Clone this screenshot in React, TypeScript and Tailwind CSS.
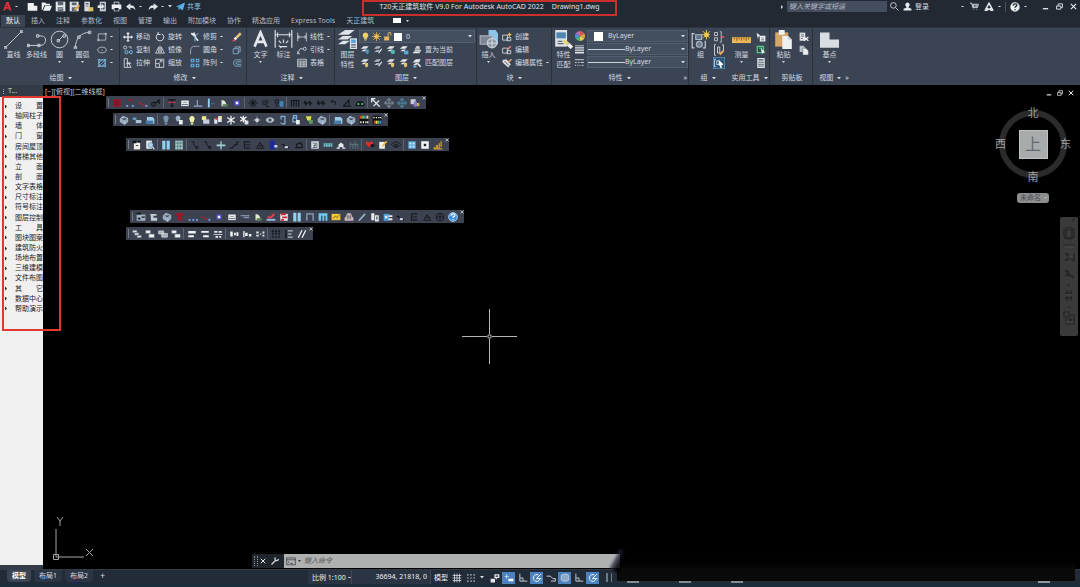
import { ReactNode, useState } from 'react'
import clsx from 'clsx'

// 16x16 drawings, shared by the ribbon, the toolbars and the status bar
const art: Record<string, ReactNode> = {
  // quick access
  newFile: <path fill="#eef0f2" d="M1 3h9l5 4v7H1z M10 3v4h5" />,
  open: <path fill="#eef0f2" d="M1 2h5l2 2h5v2H5l-3 7H1z M6 7h10l-3 7H3z" />,
  save: <><path fill="#e4e7ea" d="M1 1h14v14H1z" /><path fill="#59626e" d="M4 1h8v5H4z M4 9h8v6H4z" /><path fill="#e4e7ea" d="M5 11h6v1H5z" /></>,
  saveAs: <><path fill="#e4e7ea" d="M1 1h13v14H1z" /><path fill="#59626e" d="M4 2h7v4H4z M4 9h7v6H4z" /><path stroke="#e3a44c" strokeWidth="3" d="M8 13l7-7" /></>,
  sheet: <><path fill="#d9dde1" d="M2 1h8v14H2z" /><path fill="#5c6672" d="M4 3h4v2H4z M4 7h4v1H4z" /><path fill="#d8c163" d="M8 9h7v6H8z" /></>,
  phone: <><path fill="#c9ced5" d="M4 1h9v14H4z" /><path fill="#414a57" d="M6 3h5v9H6z" /><path fill="#e4e7ea" d="M1 6h6V4l4 4-4 4v-2H1z" /></>,
  print: <path fill="#eef0f2" fillRule="evenodd" d="M4 1h8v4h3v7h-3v3H4v-3H1V5h3z M5 2v3h6V2z M5 10v4h6v-4z" />,
  undo: <path fill="#e1e5ea" d="M7 2v3c5 0 8 3 8 8-2-3-4-4-8-4v4L0 7z" />,
  redo: <path fill="#e1e5ea" d="M9 2v3c-5 0-8 3-8 8 2-3 4-4 8-4v4l7-6z" />,
  plane: <path fill="#58b4ec" d="M0 8L16 1l-4 14-5-4-2 4-1-6 8-5-9 5z" />,
  search: <path fill="none" stroke="#d2d7dd" strokeWidth="1.6" d="M10 10l5 5 M11 6a5 5 0 1 1-10 0 5 5 0 0 1 10 0z" />,
  user: <path fill="#e8ebee" d="M8 1a4 4 0 0 1 2 7.400v1.600l5 2v3H1v-3l5-2V8.400A4 4 0 0 1 8 1z" />,
  cart: <path fill="none" stroke="#e1e5ea" strokeWidth="1.600" d="M0 2h3l2 8h8l2-6H4 M6 5v4 M9 5v4 M12 5v4 M6 13v1 M12 13v1" />,
  appStore: <path fill="none" stroke="#e8ebee" strokeWidth="2.400" d="M1 13h5 M15 13h-5 M2 13L8 2l6 11 M4 10l4 2 4-2" />,
  help: <><circle cx="8" cy="8" r="7.500" fill="#eef0f2" /><path fill="none" stroke="#222933" strokeWidth="2" d="M5 6c0-4 6-4 6-1 0 2-3 2-3 4 M8 11v2" /></>,
  min: <path stroke="#e8ebee" strokeWidth="3" d="M2 13h12" />,
  restore: <path fill="none" stroke="#e8ebee" strokeWidth="2" d="M1 7h10v7H1z M5 7V2h10v8h-4" />,
  close: <path stroke="#e8ebee" strokeWidth="2.600" d="M2 2l12 12 M14 2L2 14" />,

  // draw
  line: <path fill="none" stroke="#c9ced6" strokeWidth=".8" d="M1 15L15 1 M0 14h2v2H0z M14 0h2v2h-2z" />,
  pline: <path fill="none" stroke="#c9ced6" strokeWidth=".8" d="M0 13h11c6 0 6-8 1-8H9 M0 12h2v2H0z M9 12h2v2H9z M8 4h2v2H8z" />,
  circle: <path fill="none" stroke="#c9ced6" strokeWidth=".8" d="M15 8A7 7 0 1 1 1 8a7 7 0 0 1 14 0z M7 9l4-4 M6 8h2v2H6z M11 4h2v2h-2z" />,
  arc: <path fill="none" stroke="#c9ced6" strokeWidth=".8" d="M2 15C2 7 7 2 14 2 M1 14h2v2H1z M4 5h2v2H4z M13 1h2v2h-2z" />,
  rect: <path fill="none" stroke="#c9ced6" strokeWidth="1.200" d="M2 3h12v10H2z M1 12h2v2H1z M13 2h2v2h-2z" />,
  ellipse: <path fill="none" stroke="#c9ced6" strokeWidth="1.200" d="M15 8c0 6-14 6-14 0s14-6 14 0z M8 7v2" />,
  hatch: <path fill="none" stroke="#8cc8ee" d="M3 3h10v10H3z M1 3h14 M1 13h14 M3 1v14 M13 1v14 M3 8l5-5 M3 13L13 3 M8 13l5-5" />,
  // modify
  move: <path fill="#e8ebee" d="M8 0l3 3H9v4h4V5l3 3-3 3V9H9v4h2l-3 3-3-3h2V9H3v2L0 8l3-3v2h4V3H5z" />,
  copy: <><path fill="none" stroke="#c9ced6" strokeWidth="1.400" d="M6 4A2.500 2.500 0 1 1 1 4a2.500 2.500 0 0 1 5 0z M9 3h4v3" /><path fill="none" stroke="#7fc1ee" strokeWidth="1.500" d="M8 11.500a2.500 2.500 0 1 1-5 0 2.500 2.500 0 0 1 5 0z M15 11.500a2.500 2.500 0 1 1-5 0 2.500 2.500 0 0 1 5 0z" /></>,
  stretch: <path fill="none" stroke="#dfe3e8" strokeWidth="1.300" d="M2 1h5v14H2z M7 5l6 10H7 M5 9h7 M10 7l3 2" />,
  rotate: <path fill="none" stroke="#dfe3e8" strokeWidth="1.600" d="M11 3a6 6 0 1 1-6 0 M5 0v4h4" />,
  mirror: <path fill="none" stroke="#dfe3e8" strokeWidth="1.300" d="M6 3v10H1z M10 3v10h5z M8 1v14" />,
  scale: <path fill="none" stroke="#dfe3e8" strokeWidth="1.300" d="M1 2h13v13H1z M1 9h6v6 M7 8l4-4 M8 4h3v3" />,
  trim: <><path stroke="#e8ebee" strokeWidth="2.600" d="M6 1l3 7 M8 8l5 6 M2 2l5 4" /><path fill="none" stroke="#8cc8ee" strokeWidth="1.500" d="M13 2L8 7v8" /></>,
  fillet: <path fill="none" stroke="#b9c0c9" strokeWidth="1.200" d="M1 15V9c0-5 3-7 7-7h7" />,
  array: <path fill="none" stroke="#5fb0e4" strokeWidth="1.800" d="M2 2h4v4H2z M10 2h4v4h-4z M2 10h4v4H2z M10 10h4v4h-4z" />,
  erase: <><path stroke="#e8c077" strokeWidth="4" d="M7 9l7-7" /><path stroke="#f0f0f0" strokeWidth="4" d="M4 12l3-3" /><path stroke="#cc4b5b" strokeWidth="3" d="M1 14l4-1" /></>,
  explode: <path fill="none" stroke="#8cb7d6" strokeWidth="1.300" d="M2 6h8v8H2z M5 6V3h8v8h-3 M10 6l3-3" />,
  offset: <path fill="none" stroke="#8cb7d6" strokeWidth="1.300" d="M15 3H7c-6 0-6 10 0 10h8 M15 6H8c-2 0-2 4 0 4h7" />,
  // annotate
  bigA: <path fill="none" stroke="#e4e8ec" strokeWidth="2.200" d="M3 14L8 2l5 12 M5 10h6" />,
  dimension: <path fill="none" stroke="#d8dde3" d="M1 0v15 M15 0v15 M1 4h14 M3 2v4 M13 2v4 M4 13l2 2 M8 8v3 M4 9l2 2 M12 9l-2 2 M5 14h6" />,
  linear: <path fill="none" stroke="#d2d7dd" strokeWidth="1.300" d="M1 1v14 M15 1v14 M1 8h14 M3 5v6 M13 5v6" />,
  leader: <path fill="none" stroke="#d2d7dd" strokeWidth="1.300" d="M1 14l4-8h5 M1 10v4h4 M15 6a2.500 2.500 0 1 1-5 0 2.500 2.500 0 0 1 5 0z" />,
  table: <path fill="none" stroke="#d2d7dd" strokeWidth="1.300" d="M1 2h14v12H1z M1 5h14 M1 8h14 M1 11h14 M6 5v9 M11 5v9" />,
  // layers
  layerProps: <><path fill="#dfe3e8" d="M0 4l6-4h8l-5 4z M0 8l4-3h8l-4 3z M0 12l4-3h6l-4 3z" /><path fill="#dfe3e8" d="M10 7h6v9h-6z" /><path fill="#5ba6d8" d="M11 8h4v3h-4z" /><path fill="#4a5463" d="M11 12h4v1h-4z M11 14h4v1h-4z" /></>,
  bulb: <path fill="#f2cf6a" d="M8 1a5 5 0 0 1 3 9v2H5v-2a5 5 0 0 1 3-9z M6 13h4v2H6z" />,
  sun: <><circle cx="8" cy="8" r="4" fill="#f3bd4d" /><path stroke="#f3bd4d" strokeWidth="1.300" d="M8 0v16 M0 8h16 M2 2l12 12 M14 2L2 14" /></>,
  unlock: <><path fill="#e8b860" d="M2 8h9v7H2z" /><path fill="none" stroke="#e8b860" strokeWidth="1.800" d="M9 8V4c0-4 5-4 5 0v2" /></>,
  layBlue: <><path fill="#e4e8ec" d="M1 6l5-4h8l-4 4z M2 10l4-3h5l-3 3z" /><path fill="#4c98cf" d="M9 7h5v5l-2 3-3-3z" /></>,
  layGray: <><path fill="#aeb6c0" d="M1 6l5-4h7l-4 4z M2 11l4-3h5l-3 3z" /><path stroke="#dfe3e8" strokeWidth="2" d="M9 13l5-7" /></>,
  layTeal: <><path fill="#e4e8ec" d="M1 6l5-4h8l-4 4z M2 10l4-3h5l-3 3z" /><circle cx="11" cy="11" r="3.500" fill="#4fb7b4" /></>,
  layLock: <><path fill="#e4e8ec" d="M1 6l5-4h8l-4 4z M2 10l4-3h5l-3 3z" /><path fill="#5ba6d8" d="M8 9h7v6H8z" /></>,
  layYellow: <><path fill="#e4e8ec" d="M1 6l5-4h8l-4 4z M2 10l4-3h5l-3 3z" /><path fill="#e2c366" d="M8 8h5v5l-3 2-2-2z" /></>,
  layStack: <><path fill="#e4e8ec" d="M1 13l4-5h10l-3 5z M4 7l3-5h5l1 5z" /><path stroke="#5c6672" d="M3 10h11 M5 5h8" /></>,
  layMatch: <><path fill="#e4e8ec" d="M1 7l5-5h8l-3 5z M2 11l4-3h4l-3 3z" /><path stroke="#e4e8ec" strokeWidth="2.500" d="M9 9l5 5" /><path fill="#74b9e6" d="M2 12h5v3H2z" /></>,
  // block
  insert: <><path fill="#8cc4ea" d="M8 0h6l2 3v9H8z" /><path fill="#7c8794" stroke="#aab2bc" d="M1 5h10v7H1z" /><circle cx="11" cy="11" r="4" fill="#8d97a3" stroke="#cdd3da" /><path stroke="#cdd3da" d="M7 11h8 M11 7v8" /></>,
  create: <><path fill="none" stroke="#d2d7dd" strokeWidth="1.400" d="M1 5h8v8H1z M8 9h6v5H8z" /><path stroke="#efc05f" strokeWidth="2" d="M12 1v6 M9 4h6" /></>,
  editBlock: <><path fill="none" stroke="#d2d7dd" strokeWidth="1.400" d="M1 5h8v8H1z M8 9h6v5H8z" /><path stroke="#e6897a" strokeWidth="2.500" d="M9 7l5-5" /></>,
  editAttr: <><path fill="#dfe3e8" d="M1 3l6-1 7 8-4 5-9-8z" /><path stroke="#3b4453" strokeWidth="1.500" d="M4 5l7 7" /><path stroke="#e7a77a" strokeWidth="2.500" d="M10 7l5-5" /></>,
  // properties
  matchProps: <><path fill="#dfe3e8" d="M1 0h10v14H1z" /><path fill="#4d86b3" d="M2 2h8v5H2z" /><path fill="#5c6672" d="M3 9h4v1H3z M3 11h5v1H3z" /><path stroke="#e9d37c" strokeWidth="3" d="M8 9l4 3" /><path stroke="#f2f4f6" strokeWidth="3" d="M12 12l3 3" /></>,
  wheel: <><path fill="#e0564a" d="M8 8V0a8 8 0 0 1 7 4z" /><path fill="#e99a3c" d="M8 8l7-4a8 8 0 0 1 0 8z" /><path fill="#e6cf52" d="M8 8l7 4a8 8 0 0 1-7 4z" /><path fill="#58b26a" d="M8 8v8a8 8 0 0 1-7-4z" /><path fill="#4b8fd4" d="M8 8l-7 4a8 8 0 0 1 0-8z" /><path fill="#c06bb0" d="M8 8L1 4a8 8 0 0 1 7-4z" /></>,
  weights: <path fill="#dfe3e8" d="M0 1h16v1H0z M0 4h16v2H0z M0 8h16v2H0z M0 12h16v3H0z" />,
  linetypes: <path fill="none" stroke="#dfe3e8" strokeWidth="1.500" d="M0 3h16 M0 8h3 M5 8h3 M10 8h6 M0 13h2 M4 13h2 M8 13h2 M12 13h3" />,
  // groups and utilities
  group: <><path fill="none" stroke="#c9ced6" d="M3 3H1v12h2 M12 9v6h-2" /><path fill="#5e7389" stroke="#aab6c3" d="M4 4h5v4H4z" /><circle cx="7" cy="12" r="2.500" fill="#6f7b89" stroke="#aab6c3" /><circle cx="13" cy="4" r="2" fill="#f6d27c" /><path stroke="#f3c35b" strokeWidth=".8" d="M13 0v8 M9 4h7 M10 1l6 6 M16 1l-6 6" /></>,
  ungroup: <><path fill="none" stroke="#b9c0c9" strokeWidth="1.300" d="M2 2h4v4H2z M2 9h4v4H2z M9 1h2v14H9" /><path stroke="#d9627a" strokeWidth="2" d="M10 8h5" /></>,
  groupEdit: <><path fill="none" stroke="#c9ced6" strokeWidth="1.300" d="M4 1H2v14h2 M6 4h3v8H6z M12 1h2v8" /><path stroke="#efaf62" strokeWidth="2.400" d="M9 14l5-5" /></>,
  groupSel: <><path fill="#2d567a" stroke="#7fc1ee" d="M0 0h16v16H0z" /><path fill="none" stroke="#d9ecf8" d="M4 3H2v10h2 M5 5h3v5H5z" /><path fill="#fff" d="M8 4l6 6-3 1 1 3-2 1-1-4-1 1z" /></>,
  ruler: <><path fill="#e9b659" d="M0 6h16v5H0z" /><path stroke="#a26d22" d="M2 6v2 M4 6v3 M6 6v2 M8 6v3 M10 6v2 M12 6v3 M14 6v2" /></>,
  quickSel: <><path fill="#eef0f2" d="M1 1l6 5-3 1-1 4z M6 6h9v9H6z" /><path fill="#4a5463" d="M8 9h5v1H8z M8 12h5v1H8z" /></>,
  selAll: <><path fill="none" stroke="#57c785" strokeWidth="2" d="M2 2h10v10H2z M5 5h4v4" /><path fill="#fff" d="M8 6l7 6-4 0-1 3z" /></>,
  calc: <><path fill="#dfe3e8" d="M2 0h12v16H2z" /><path fill="#4a5463" d="M4 2h8v2H4z M4 6h2v2H4z M7 6h2v2H7z M10 6h2v2h-2z M4 9h2v2H4z M7 9h2v2H7z M10 9h2v2h-2z M4 12h2v2H4z M7 12h2v2H7z M10 12h2v2h-2z" /></>,
  paste: <><path fill="#d5a667" d="M1 2h11v12H1z" /><path fill="#eef0f2" d="M4 0h5v4H4z M7 5h5l3 3v8H7z" /><path fill="#b9c0c9" d="M12 5v3h3z" /></>,
  cut: <><path fill="#dfe3e8" d="M1 1h9v13H1z" /><path fill="#4a5463" d="M3 4h5v1H3z M3 7h5v1H3z M3 10h3v1H3z" /><path stroke="#eef0f2" strokeWidth="2" d="M8 8l7 6 M15 8l-7 6" /></>,
  copyClip: <><path fill="#b9c0c9" d="M1 1h6l3 3v7H1z" /><path fill="#eef0f2" stroke="#4a5463" strokeWidth=".8" d="M6 5h5l4 4v7H6z" /></>,
  basePoint: <path fill="#d9dde1" d="M0 2h8v6h8v7H0z" />,

  // floating toolbars
  tRed: <><path fill="#a31529" d="M2 2h12v12H2z" /><path stroke="#5b1a2b" d="M2 6h12 M2 10h12 M6 2v12 M10 2v12" /></>,
  tDots: <path fill="#7aa5ee" d="M1 11h3v3H1z M7 11h3v3H7z M13 11h3v3h-3z" />,
  tDotsTop: <><path fill="#7aa5ee" d="M2 11h3v3H2z M11 11h3v3h-3z" /><path fill="#a31529" d="M4 2h8v2H4z" /></>,
  tRedDash: <><path fill="#b51f38" d="M1 7h4v2H1z M6 10h5v2H6z" /><path fill="#7aa5ee" d="M12 11h3v3h-3z" /></>,
  tKey: <path fill="none" stroke="#11151b" strokeWidth="1.800" d="M7 10a3 3 0 1 1-6 0 3 3 0 0 1 6 0z M7 8l6-5v5 M10 6l4 3" />,
  tWindowRed: <><path fill="none" stroke="#11151b" strokeWidth="2" d="M2 3h12 M8 4v10 M5 13h6" /><path stroke="#b83246" strokeWidth="2" d="M2 7h12" /></>,
  tWhite: <><path fill="#e8ebee" d="M2 4h12v9H2z" /><path fill="#4b5360" d="M5 7h6v1H5z M3 10h10v1H3z" /></>,
  tBaseline: <path fill="none" stroke="#8fa6ce" strokeWidth="1.800" d="M1 13h14 M7 3v10" />,
  tBar: <><path fill="#8fd2f2" d="M3 1h3v14H3z" /><path stroke="#2f6f93" strokeWidth="1.500" d="M8 9h6" /></>,
  tQuarter: <><path fill="#dfe8d8" d="M4 3c6 0 8 5 8 10H4z" /><path fill="#567a4f" d="M6 10h8v4H6z" /></>,
  tDot: <><path fill="#554fd6" d="M4 4h8v8H4z" /><path fill="#eef0f2" d="M6 6h4v4H6z" /></>,
  tStar: <path stroke="#11151b" strokeWidth="1.600" d="M3 3l10 10 M13 3L3 13 M8 1v14 M1 8h14" />,
  tStarGray: <path fill="none" stroke="#15191f" strokeWidth="1.400" d="M3 5h5v5H3z M8 2l4 4-4 4 M9 10v4h4" />,
  tStarBlue: <><path fill="#3f82b8" d="M9 5h6v9H9z" /><path fill="none" stroke="#15191f" strokeWidth="1.500" d="M2 3h5v5H2z M4 9v4h4" /></>,
  tBars: <path fill="none" stroke="#11151b" strokeWidth="1.700" d="M1 4h14 M2 4v10 M6 4v10 M10 4v10 M14 4v10" />,
  tDim: <path fill="none" stroke="#11151b" strokeWidth="1.700" d="M1 8h14 M4 4v8 M11 4v8 M2 6l4 4 M9 6l4 4" />,
  tHook: <path fill="none" stroke="#11151b" strokeWidth="1.600" d="M3 6h7v5 M3 6l3-3" />,
  tAngle: <path fill="none" stroke="#11151b" strokeWidth="1.800" d="M2 13h12 M2 13l9-10v8" />,
  tCar: <><path fill="#11151b" d="M1 10l3-5h8l3 5v3H1z" /><path fill="#4fb56b" d="M4 8h3v3H4z M10 8h3v3h-3z" /></>,
  tX: <path stroke="#e2e6ea" strokeWidth="2" d="M2 2l12 12 M13 4l-9 9 M1 7V1h6" />,
  tMove: <path fill="none" stroke="#76818f" strokeWidth="2" d="M8 1v14 M1 8h14 M5 4l3-3 3 3 M5 12l3 3 3-3 M12 5l3 3-3 3 M4 5L1 8l3 3" />,
  tMoveTeal: <path fill="none" stroke="#4d7f96" strokeWidth="2" d="M8 1v14 M1 8h14 M5 4l3-3 3 3 M5 12l3 3 3-3 M12 5l3 3-3 3 M4 5L1 8l3 3" />,
  tMulti: <><path fill="#c9ced6" d="M1 2h8v8H1z" /><path fill="#8d7bd1" d="M6 6h5v8H6z" /><path fill="#c5b24c" d="M11 8h4v5h-4z" /></>,
  tCube: <path fill="#8fa9c2" stroke="#c9d6e2" d="M2 6l4-4 8 3v6l-5 4-7-4z M2 6l7 3 5-4 M9 9v6" />,
  tSwap: <><path fill="#5a9cc8" d="M1 4h6v4H1z" /><path fill="#a9c4d8" d="M6 8h9v5H6z" /></>,
  tBox: <><path fill="#9cc8e6" d="M3 3h9l3 3v8H3z" /><path fill="#4479a6" d="M1 9h12v5H1z" /></>,
  tBulb: <path fill="#7495b5" d="M8 1a4 4 0 0 1 3 7v3H5V8a4 4 0 0 1 3-7z M6 12h4v3H6z" />,
  tBulbOn: <path fill="#f1f3a6" d="M8 1a5 5 0 0 1 3 8v2H5V9a5 5 0 0 1 3-8z M6 12h4v3H6z" />,
  tBulbPage: <><path fill="#9db4ca" d="M6 1a4 4 0 0 1 3 7v2H4V8a4 4 0 0 1 2-7z" /><path fill="#e8ebee" d="M8 8h6v7H8z" /></>,
  tBulbCube: <><path fill="#f1e98c" d="M3 2h7v6H3z" /><path fill="#c4d0dc" d="M5 7h10v7H5z" /></>,
  tBulbRed: <><path fill="#dfe7ee" d="M2 6h5v8H2z M8 2h6v9H8z" /><path fill="#d14a4a" d="M4 5h3v3H4z" /><path fill="#efe27d" d="M10 2h4v4h-4z" /></>,
  tSnow: <path stroke="#f1f3f5" strokeWidth="2" d="M8 1v14 M2 4l12 8 M14 4L2 12" />,
  tSnowPage: <><path stroke="#f1f3f5" strokeWidth="2" d="M7 1v11 M2 3l10 7 M12 3L2 10" /><path fill="#dfe3e8" d="M9 9h6v6H9z" /></>,
  tSpark: <><circle cx="8" cy="8" r="3" fill="#fff" /><path stroke="#a9b4bf" d="M8 2v12 M2 8h12" /></>,
  tEye: <><path fill="#b5c1cd" d="M1 8c3-6 11-6 14 0-3 6-11 6-14 0z" /><circle cx="8" cy="8" r="2.500" fill="#3c4655" /></>,
  tLockBlue: <path fill="none" stroke="#7fb2e0" strokeWidth="2" d="M5 7V2h6v12H6 M5 12v2" />,
  tLockPage: <><path fill="none" stroke="#7fb2e0" strokeWidth="1.800" d="M3 5h6v6H3z M4 5V1h5v4" /><path fill="#e8ebee" d="M8 8h6v7H8z" /></>,
  tBrush: <><path fill="#d8e04a" d="M3 2h9l-2 9-5-3z" /><path fill="#5aa05e" d="M8 8h6v6H8z" /></>,
  tPalette: <><path fill="#111" d="M1 1h14v14H1z" /><path fill="#e94335" d="M1 1h4v5H1z" /><path fill="#51d04b" d="M5 1h4v5H5z" /><path fill="#3f79f0" d="M9 1h3v5H9z" /><path fill="#f6df45" d="M12 1h3v5h-3z" /><path fill="#fff" d="M2 10h2v3H2z M6 10h2v3H6z M10 10h2v3h-2z M13 10h2v3h-2z" /></>,
  tPaletteLow: <><path fill="#111" d="M1 1h14v14H1z" /><path fill="#e94335" d="M3 9h3v5H3z" /><path fill="#f6df45" d="M6 9h3v5H6z" /><path fill="#51d04b" d="M9 9h3v5H9z" /><path fill="#3f79f0" d="M12 9h3v5h-3z" /><path fill="#fff" d="M2 3h2v2H2z M6 3h2v2H6z M10 3h2v2h-2z M13 3h2v2h-2z" /></>,
  tNote: <><path fill="#f1f1ea" d="M3 4h10v11H3z" /><path fill="#11151b" d="M1 1h6v4H1z M9 1h5v3H9z M6 8h4v1H6z" /></>,
  tZoomPage: <><path fill="#e8ebee" d="M2 1h9v13H2z" /><circle cx="9" cy="8" r="4" fill="#a9d3ee" stroke="#5484a8" /><path stroke="#dfe3e8" strokeWidth="2" d="M12 11l3 4" /></>,
  tColumns: <path fill="#8fd2f2" d="M2 1h5v14H2z M9 1h5v14H9z" />,
  tGridTeal: <><path fill="#a7ccc9" d="M2 1h12v14H2z" /><path stroke="#4f7b80" strokeWidth="1.300" d="M2 5h12 M2 10h12 M6 1v14 M10 1v14" /></>,
  tPoly: <path fill="none" stroke="#15191f" strokeWidth="1.500" d="M2 3h4v5l6 5 M13 12a2 2 0 1 1-4 0 2 2 0 0 1 4 0z" />,
  tTee: <path fill="#9fd3d8" d="M1 7h6V2h2v5h6v3H9v5H7v-5H1z" />,
  tStairs: <path fill="none" stroke="#15191f" strokeWidth="1.800" d="M1 13h4l5-6h3V3h2" />,
  tE: <path fill="none" stroke="#171b22" strokeWidth="1.700" d="M3 3h10 M3 8h10 M3 13h10 M4 3v10" />,
  tTri: <path fill="none" stroke="#171b22" strokeWidth="1.600" d="M2 13h13 M3 12l5-8 5 8 M5 9h8" />,
  tDoor: <><path fill="#1d2a9c" d="M3 1h8v14H3z" /><path fill="#c8cfe8" d="M10 8h5v4h-5z" /></>,
  tDip: <><path stroke="#15191f" strokeWidth="2" d="M1 7h3l3 5h6" /><path fill="#dfe3e8" d="M6 10h5v3H6z" /></>,
  tRoof: <path fill="none" stroke="#15191f" strokeWidth="2" d="M2 12h12 M4 12V7l6-3 3 4v4" />,
  tMaze: <><path fill="#dbe2e8" d="M2 2h12v12H2z" /><path fill="none" stroke="#56616e" strokeWidth="1.300" d="M4 5h5v4H5 M11 4v8H4 M7 12V7" /></>,
  tTealBar: <><path fill="#6fb6bd" d="M1 5h14v6H1z" /><path stroke="#2f6a70" d="M4 5v6 M8 5v6 M12 5v6" /></>,
  tHouse: <path fill="#e3ecef" d="M1 12h3V7l4-3 4 3v5h3v2h-5v-3H6v3H1z" />,
  tFence: <path fill="none" stroke="#57707c" strokeWidth="1.700" d="M2 3v11 M6 6v8 M10 2v12 M14 6v8 M2 7h12" />,
  tHeart: <><path fill="#e02c2c" d="M7 12L1 6c0-5 5-4 6-1 1-3 5-4 6 1z" /><path fill="#11151b" d="M9 7h6v4H9z" /></>,
  tPencil: <><path fill="#f1f1ea" d="M2 3h9v11H2z" /><path stroke="#e8b93c" strokeWidth="2.500" d="M7 10l7-8" /></>,
  tEyeDark: <path fill="none" stroke="#171b22" strokeWidth="1.600" d="M1 7c3-5 11-5 14 0-3 6-11 6-14 0z M6 7h4v3H6z" />,
  tBlueGrid: <><path fill="#5ba8dc" d="M2 2h12v12H2z" /><path fill="#d3eaf8" d="M4 4h3v3H4z M9 4h3v3H9z M4 9h3v3H4z M9 9h3v3H9z" /></>,
  tSquareDot: <><path fill="#f4f5f6" d="M2 2h12v12H2z" /><path fill="#20262f" d="M6 6h4v4H6z" /></>,
  tChart: <path fill="#d19d2c" d="M1 11h3v4H1z M5 8h3v7H5z M9 5h2v10H9z M12 2h2v9h-2z M1 13h14v2H1z" />,
  tPanel: <><path fill="#9fb0c2" d="M1 4h14v10H1z" /><path fill="#15191f" d="M1 1h7v3H1z M9 7h5v2H9z M3 9h4v3H3z" /></>,
  tSofa: <path fill="#c3cdd6" d="M2 3h10v3H7v3h6v5H3V8z" />,
  tRedCap: <path fill="#a31529" d="M2 2h12v4h-3v8H5V6H2z" />,
  tLineDash: <path stroke="#9aa9c4" strokeWidth="1.600" d="M1 6h14 M6 9h9" />,
  tRedSwoosh: <><path fill="none" stroke="#e0414f" strokeWidth="3" d="M3 7c3 4 6 2 10-4" /><path fill="#9db9e2" d="M1 11h14v3H1z" /></>,
  tRedCube: <><path fill="#e8ebee" d="M2 3h12v11H2z" /><path fill="#cf2836" d="M3 2h8v3H3z M5 7h8v3H5z M3 11h5v3H3z" /></>,
  tGate: <path fill="#8fa4c4" d="M2 2h12v12h-2V4H4v10H2z" />,
  tM: <path fill="#6fcaf0" d="M1 2h14v12h-3V6h-2v8H7V6H5v8H1z" />,
  tFlag: <><path fill="#f0c938" d="M1 3h14v10H1z" /><path fill="none" stroke="#8a5f16" strokeWidth="1.500" d="M3 10l4-3 3 2 4-5" /></>,
  tCastle: <><path fill="#c9b9bb" d="M1 14V9l2-2 2-5h6l2 5 2 2v5z" /><path stroke="#59525a" d="M4 8h8 M6 4v8 M10 4v8" /></>,
  tSpear: <path stroke="#96b9d2" strokeWidth="2.400" d="M3 14L13 3" />,
  tPages: <><path fill="#e8ebee" d="M2 2h5v11H2z M8 5h6v10H8z" /><path fill="#4b5360" d="M10 7h2v5h-2z" /></>,
  tBlueDoc: <><path fill="#4f9ed8" d="M1 3h9v11H1z" /><path fill="#e8ebee" d="M9 5h6v3H9z M9 10h6v3H9z M3 6h4v4H3z" /></>,
  tGlobe: <path fill="none" stroke="#171b22" strokeWidth="1.600" d="M14 8A6 6 0 1 1 2 8a6 6 0 0 1 12 0z M8 2v12 M2 8h12" />,
  tHelp: <><circle cx="8" cy="8" r="7.500" fill="#3d8fe6" /><circle cx="8" cy="8" r="7" fill="none" stroke="#d5e8fb" /><path fill="none" stroke="#fff" strokeWidth="2" d="M5 6c0-4 6-4 6-1 0 2-3 2-3 4 M8 11v2" /></>,
  tCascade: <path fill="#dfe3e8" stroke="#59616d" d="M1 2h7v4H1z M4 6h7v4H4z M8 10h7v4H8z" />,
  tCascadeW: <path fill="#f1f3f5" stroke="#59616d" d="M1 2h8v5H1z M6 8h9v6H6z" />,
  tCascadeG: <path fill="#a9b0b9" stroke="#e4e7ea" d="M1 3h8v5H1z M6 7h9v6H6z" />,
  tRows: <path fill="#f1f3f5" d="M2 3h12v4H2z M2 10h9v3H2z" />,
  tRowsR: <path fill="#f1f3f5" d="M2 3h12v3H2z M5 10h9v3H5z" />,
  tRowsC: <path fill="#f1f3f5" d="M2 3h5v3H2z M9 3h5v3H9z M1 8h14v1H1z M4 11h4v3H4z M10 11h3v3h-3z" />,
  tCols: <path fill="#f1f3f5" d="M2 4h4v8H2z M8 6h3v4H8z M12 5h3v6h-3z" />,
  tColsB: <path fill="#f1f3f5" d="M2 3h2v10H2z M5 6h4v5H5z M11 8h4v4h-4z" />,
  tColsC: <path fill="#dfe3e8" d="M2 4h4v3H2z M2 9h4v3H2z M8 7h2v2H8z M12 4h3v3h-3z M12 9h3v3h-3z" />,
  tHatch: <path stroke="#11151b" strokeWidth="2" strokeDasharray="3 2" d="M3 1v14 M8 1v14 M13 1v14 M1 4h14" />,
  tList: <><path stroke="#11151b" strokeWidth="2" d="M3 1v14" /><path stroke="#dfe3e8" strokeWidth="1.500" d="M6 3h8 M6 8h6 M6 13h8" /></>,
  tSlash: <path stroke="#f1f3f5" strokeWidth="2" d="M2 14L8 2 M8 14l6-12" />,

  // command line and status bar
  wrench: <path fill="none" stroke="#d2d7dd" strokeWidth="2.500" d="M1 15l8-8 M9 1c-2 2-1 6 2 6 2 0 4-1 4-3" />,
  prompt: <path fill="none" stroke="#3b3f45" strokeWidth="1.200" d="M1 3h14v11H1z M1 6h14 M3 9l2 1-2 2 M7 12h4" />,
  grid: <path stroke="#dfe3e8" strokeWidth="1.200" d="M1 4h14 M1 8h14 M1 12h14 M4 1v14 M8 1v14 M12 1v14" />,
  gridDots: <path stroke="#dfe3e8" strokeWidth="1.800" strokeDasharray="2 3" d="M2 3h13 M2 8h13 M2 13h13" />,
  infer: <path fill="#e4e8ec" fillRule="evenodd" d="M1 9h7v6H1z M7 2h8v6h-4v2H9V8H7z M9 4v2h4V4z" />,
  dynInput: <path fill="#fff" d="M4 2h1v3h3v1H5v3H4V6H1V5h3z M7 9h8v4H7z" />,
  ortho: <path fill="none" stroke="#c9ced6" strokeWidth="1.500" d="M3 1v12h12 M3 8h5v5" />,
  polar: <path fill="none" stroke="#f1f6fb" strokeWidth="1.600" d="M13 9a5.500 5.500 0 1 1-3-6 M7 9l7-7 M7 9h8" />,
  isnap: <path fill="none" stroke="#c9ced6" strokeWidth="1.600" d="M1 5h6l4 4h4v4H8" />,
  osnap: <path fill="#8fa9c9" stroke="#d5e0ec" d="M2 4c2-3 10-3 12 0v7c-2 3-10 3-12 0z" />,
}

function Icon({ name, className = 'size-[11px]' }: { name: string; className?: string }) {
  return (
    <svg viewBox="0 0 16 16" aria-hidden="true" className={clsx('shrink-0', className)} fill="none">
      {art[name]}
    </svg>
  )
}

function Caret({ className = 'w-1' }: { className?: string }) {
  return (
    <svg viewBox="0 0 8 5" aria-hidden="true" className={clsx('shrink-0', className)}>
      <path fill="#d5dae0" d="M0 0h8L4 5z" />
    </svg>
  )
}

function BigTool({ icon, label, label2, caret }: { icon: string; label: string; label2?: string; caret?: boolean }) {
  return (
    <button className="flex w-[23px] shrink-0 flex-col items-center whitespace-nowrap">
      <Icon name={icon} className="size-[19px]" />
      <span className="leading-3">{label}</span>
      {label2 && <span className="leading-2">{label2}</span>}
      {caret && <Caret className="w-[3px]" />}
    </button>
  )
}

function Tool({ icon, label, caret }: { icon: string; label?: string; caret?: boolean }) {
  return (
    <button className="flex h-[13px] items-center gap-[3px] whitespace-nowrap" aria-label={label ?? icon}>
      <Icon name={icon} className="size-[10px]" />
      {label}
      {caret && <Caret className="w-[3px]" />}
    </button>
  )
}

function Panel({ title, className, caret = true, launcher, border = true, children }: {
  title: string
  className: string
  caret?: boolean
  launcher?: boolean
  border?: boolean
  children: ReactNode
}) {
  return (
    <section className={clsx('flex shrink-0 flex-col', border && 'border-r border-[#2a313d]', className)}>
      <div className="flex h-[44px] pt-[2px]">{children}</div>
      <div className="flex h-3 items-center justify-center gap-1 whitespace-nowrap">
        {launcher && <span className="flex-1" />}
        {title}
        {caret && <Caret />}
        {launcher && <span className="flex-1 pr-px text-right">»</span>}
      </div>
    </section>
  )
}

function ByLayer({ label, kind }: { label: string; kind: 'color' | 'line' }) {
  return (
    <div className="relative flex h-[12px] items-center border border-[#525d6d] bg-[#434e5f]">
      {kind === 'color'
        ? <span className="ml-[6px] mr-[5px] size-[9px] bg-white" />
        : <span className="h-px w-[37px] bg-[#cdd2d9]" />}
      <select aria-label={label} className="h-full min-w-0 flex-1 appearance-none bg-transparent outline-none">
        <option>ByLayer</option>
        <option>ByBlock</option>
      </select>
      <Caret className="absolute right-[2px] w-1" />
    </div>
  )
}

const tabs = ['默认', '插入', '注释', '参数化', '视图', '管理', '输出', '附加模块', '协作', '精选应用', 'Express Tools', '天正建筑']

const menu = [
  '设置', '轴网柱子', '墙体', '门窗', '房间屋顶', '楼梯其他', '立面', '剖面', '文字表格', '尺寸标注', '符号标注',
  '图层控制', '工具', '图块图案', '建筑防火', '场地布置', '三维建模', '文件布图', '其它', '数据中心', '帮助演示',
]

// '|' is a divider
const toolbars = [
  { place: 'left-[63px] top-[11px]', items: 'tRed tDotsTop tRedDash tKey | tWindowRed tWhite tBaseline tBar tQuarter tDot | tStar tStarGray tStarBlue | tBars tDim tDim tHook tAngle tCar | tX tMove tMoveTeal tMulti' },
  { place: 'left-[70px] top-[28px]', items: 'tCube tSwap tBox | tBulb tBulbPage tBulbOn tBulbCube tBulbRed tSnow tSnowPage tSpark tEye tLockBlue tLockPage tBrush tCube | tBox tCube tPalette tPaletteLow' },
  { place: 'left-[83px] top-[53px]', items: 'tNote tZoomPage | tColumns tGridTeal | tPoly tPoly tTee tStairs tE tTri tDoor tDip tRoof | tMaze tTealBar tHouse tFence | tHeart tPencil tEyeDark | tBlueGrid tSquareDot tChart' },
  { place: 'left-[87px] top-[125px]', items: 'tPanel tSofa tCube tRedCap tDots tRedDash tDot tWhite tLineDash tQuarter tRedSwoosh tRedCube tColumns tGate tM tFlag tCastle tSpear tPages tBlueDoc tDip tE tTri tGlobe tHelp' },
  { place: 'left-[83px] top-[142px]', items: 'tCascade tCascadeW tCascadeG tCascadeW | tRows tRowsR tRowsC | tCols tColsB tColsC | tHatch tList tSlash' },
]

function Toolbar({ place, items }: { place: string; items: string }) {
  return (
    <div className={clsx('absolute flex h-[13px] items-center bg-[#3c424f] pl-1 pr-[5px]', place)}>
      <span className="absolute left-[2px] h-[9px] w-px bg-[#747c88]" />
      {items.split(' ').map((item, i) =>
        item === '|' ? (
          <span key={i} className="mx-px h-[11px] w-px bg-[#5d6674]" />
        ) : (
          <button key={i} aria-label={item} className="flex w-[13px] justify-center">
            <Icon name={item} className="size-[10px]" />
          </button>
        )
      )}
      <button aria-label="关闭" className="absolute right-0 top-0">
        <Icon name="close" className="size-1" />
      </button>
    </div>
  )
}

function TitleBar() {
  return (
    <header className="relative flex h-[13px] shrink-0 items-center justify-between">
      <div className="flex items-center gap-[3px] pl-[3px]">
        <svg viewBox="0 0 16 16" className="size-[9px]" aria-hidden="true">
          <path fill="#d6303b" fillRule="evenodd" d="M6 0h4l5 15h-4l-1-3H5l-1 3H0z M7 5L6 9h3z" />
        </svg>
        <Caret className="mr-[6px] w-[3px]" />
        {['newFile', 'open', 'save', 'saveAs', 'sheet', 'phone', 'print'].map(name => (
          <button key={name} aria-label={name}><Icon name={name} className="size-[11px]" /></button>
        ))}
        <button aria-label="undo" className="ml-px"><Icon name="undo" className="size-[10px]" /></button>
        <Caret className="w-[3px]" />
        <button aria-label="redo" className="ml-[3px]"><Icon name="redo" className="size-[10px]" /></button>
        <Caret className="w-[3px]" />
        <Caret className="ml-px w-1" />
        <button className="ml-px flex items-center gap-[2px] text-[#8fc7ec]"><Icon name="plane" className="size-[9px]" />共享</button>
      </div>

      <h1 className="absolute left-1/2 top-0 z-10 flex h-4 w-[255px] -translate-x-[178px] items-center justify-center gap-2 whitespace-nowrap border-2 border-[#c9302c] pb-[2px] text-[#dfe3e8]">
        <span>T20天正建筑软件 V9.0 For Autodesk AutoCAD 2022</span>
        <span>Drawing1.dwg</span>
      </h1>

      <div className="flex items-center">
        <svg viewBox="0 0 4 8" className="mr-1 h-1" aria-hidden="true"><path fill="#d5dae0" d="M0 0l4 4-4 4z" /></svg>
        <input aria-label="搜索" placeholder="键入关键字或短语" className="h-[11px] w-[100px] bg-[#454e5e] pl-[2px] italic outline-none placeholder:text-[#b4bbc5]" />
        <button aria-label="search" className="ml-[3px]"><Icon name="search" className="size-[9px]" /></button>
        <button className="ml-1 flex items-center gap-[3px]"><Icon name="user" className="size-[9px]" />登录</button>
        <Caret className="ml-8 w-[3px]" />
        <button aria-label="cart" className="ml-[6px]"><Icon name="cart" className="size-[9px]" /></button>
        <button aria-label="apps" className="ml-[5px] flex items-center gap-1"><Icon name="appStore" className="size-[10px]" /><Caret className="w-[3px]" /></button>
        <span className="mx-1 h-[10px] w-px bg-[#47505d]" />
        <button aria-label="help" className="flex items-center gap-1"><Icon name="help" className="size-[10px]" /><Caret className="w-[3px]" /></button>
        <div className="ml-[15px] mr-[3px] flex gap-[7px]">
          {['min', 'restore', 'close'].map(name => (
            <button key={name} aria-label={name}><Icon name={name} className="size-[7px]" /></button>
          ))}
        </div>
      </div>
    </header>
  )
}

function Ribbon() {
  return (
    <div className="flex h-[58px] shrink-0 overflow-hidden border-t border-[#2d3440] bg-[#3b4453]">
      <Panel title="绘图" className="w-[120px] pl-[2px]">
        <BigTool icon="line" label="直线" />
        <BigTool icon="pline" label="多段线" />
        <BigTool icon="circle" label="圆" caret />
        <BigTool icon="arc" label="圆弧" caret />
        <div className="ml-[3px]">
          <Tool icon="rect" caret />
          <Tool icon="ellipse" caret />
          <Tool icon="hatch" caret />
        </div>
      </Panel>
      <Panel title="修改" className="w-[127px] pl-[3px]">
        <div className="grid h-[39px] grid-cols-[32px_35px_42px_10px]">
          <Tool icon="move" label="移动" /><Tool icon="rotate" label="旋转" /><Tool icon="trim" label="修剪" caret /><Tool icon="erase" />
          <Tool icon="copy" label="复制" /><Tool icon="mirror" label="镜像" /><Tool icon="fillet" label="圆角" caret /><Tool icon="explode" />
          <Tool icon="stretch" label="拉伸" /><Tool icon="scale" label="缩放" /><Tool icon="array" label="阵列" caret /><Tool icon="offset" />
        </div>
      </Panel>
      <Panel title="注释" className="w-[88px] pl-[2px]">
        <BigTool icon="bigA" label="文字" caret />
        <BigTool icon="dimension" label="标注" />
        <div className="ml-[2px]">
          <Tool icon="linear" label="线性" caret />
          <Tool icon="leader" label="引线" caret />
          <Tool icon="table" label="表格" />
        </div>
      </Panel>
      <Panel title="图层" className="w-[142px] pl-px">
        <BigTool icon="layerProps" label="图层" label2="特性" />
        <div className="flex-1">
          <div className="relative mr-px flex h-[13px] items-center gap-[2px] border border-[#525d6d] bg-[#434e5f] pl-px">
            <Icon name="bulb" className="size-[9px]" />
            <Icon name="sun" className="size-[9px]" />
            <Icon name="unlock" className="size-[9px]" />
            <span className="size-[8px] bg-white" />
            <select aria-label="图层" className="h-full min-w-0 flex-1 appearance-none bg-transparent pl-[2px] outline-none">
              <option>0</option>
            </select>
            <Caret className="absolute right-[2px] w-1" />
          </div>
          {[
            { icons: ['layBlue', 'layGray', 'layTeal', 'layLock'], last: 'layStack', label: '置为当前' },
            { icons: ['layYellow', 'layGray', 'layYellow', 'layYellow'], last: 'layMatch', label: '匹配图层' },
          ].map(row => (
            <div key={row.label} className="flex gap-[3px] pl-px">
              {row.icons.map((name, i) => <Tool key={i} icon={name} />)}
              <Tool icon={row.last} label={row.label} />
            </div>
          ))}
        </div>
      </Panel>
      <Panel title="块" className="w-[75px]">
        <BigTool icon="insert" label="插入" caret />
        <div className="ml-[2px]">
          <Tool icon="create" label="创建" />
          <Tool icon="editBlock" label="编辑" />
          <Tool icon="editAttr" label="编辑属性" caret />
        </div>
      </Panel>
      <Panel title="特性" className="w-[137px]" launcher>
        <BigTool icon="matchProps" label="特性" label2="匹配" />
        <div className="flex w-[12px] shrink-0 flex-col gap-1 pt-px">
          <Icon name="wheel" className="size-[10px]" />
          <Icon name="weights" className="size-[9px]" />
          <Icon name="linetypes" className="size-[9px]" />
        </div>
        <div className="flex flex-1 flex-col gap-px">
          <ByLayer label="颜色" kind="color" />
          <ByLayer label="线宽" kind="line" />
          <ByLayer label="线型" kind="line" />
        </div>
      </Panel>
      <Panel title="组" className="w-[38px]" border={false}>
        <BigTool icon="group" label="组" />
        <div className="ml-px [&_svg]:size-[12px]">
          <Tool icon="ungroup" /><Tool icon="groupEdit" /><Tool icon="groupSel" />
        </div>
      </Panel>
      <Panel title="实用工具" className="w-[43px] pl-[3px]">
        <BigTool icon="ruler" label="测量" caret />
        <div className="ml-[3px]">
          <Tool icon="quickSel" /><Tool icon="selAll" /><Tool icon="calc" />
        </div>
      </Panel>
      <Panel title="剪贴板" className="w-[43px] pl-[2px]" caret={false}>
        <BigTool icon="paste" label="粘贴" caret />
        <div className="ml-1">
          <Tool icon="cut" /><Tool icon="copyClip" />
        </div>
      </Panel>
      <Panel title="视图" className="w-[34px] pl-[5px]" launcher border={false}>
        <BigTool icon="basePoint" label="基点" caret />
      </Panel>
    </div>
  )
}

function ViewCube() {
  return (
    <div className="absolute right-[8px] top-[20px] flex flex-col items-center gap-[10px]">
      <div className="relative grid size-[78px] place-items-center">
        <div className="absolute inset-[5px] rounded-full border-[6px] border-[#2b2b2b]" />
        <button className="grid size-[29px] place-items-center border border-[#c0c2c2] bg-[#a8abab] text-[16px] leading-none text-[#66696b]">上</button>
        <span className="absolute top-0 text-[11px] leading-4 text-[#a2a2a2]">北</span>
        <span className="absolute bottom-[-2px] text-[11px] leading-4 text-[#a2a2a2]">南</span>
        <span className="absolute left-px text-[11px] leading-4 text-[#a2a2a2]">西</span>
        <span className="absolute right-px text-[11px] leading-4 text-[#a2a2a2]">东</span>
      </div>
      <button className="flex h-[10px] w-8 items-center gap-[3px] rounded-[3px] bg-[#8c8e8e] pl-[3px] text-[#4a4d4f]">
        未命名
        <svg viewBox="0 0 8 5" className="w-[3px]" aria-hidden="true"><path fill="#b5b7b7" d="M0 0h8L4 5z" /></svg>
      </button>
    </div>
  )
}

function Canvas() {
  return (
    <main className="relative flex-1 overflow-hidden bg-black">
      <p className="pl-[2px] leading-[13px] text-[#c4c8cc]">[−][俯视][二维线框]</p>
      {toolbars.map(bar => <Toolbar key={bar.place} {...bar} />)}

      <div className="absolute right-[6px] top-[5px] flex gap-[5px]">
        {['min', 'restore', 'close'].map(name => (
          <button key={name} aria-label={name}><Icon name={name} className="size-[6px]" /></button>
        ))}
      </div>
      <ViewCube />

      {/* navigation bar */}
      <div className="absolute right-[2px] top-[132px] h-[119px] w-[18px] rounded-[2px] bg-[#3a3a3a]">
        <svg viewBox="0 0 18 119" className="h-full w-full" fill="none" stroke="#242424" strokeWidth="1.2" aria-hidden="true">
          <path d="M15 1l-3 3M3 28h12M6 13h6v8H6zM4 13c0-3 10-3 10 0v6c0 4-10 4-10 0zM5 36l3 3M5 44l4-4 5 4v-8M8 36v8M5 53l8 8M8 53v6h6M5 59l3-3M8 67l1 2M5 76h8M5 81h8M7 73v11M11 73v11M9 89v2M4 95h5v5H4zM9 98h5v9H6v-7M9 102h2v2H9z" />
          <path stroke="#4d4d4d" strokeWidth="1" d="M5 30h9M8 40h4M6 78h6M6 105h7" />
        </svg>
      </div>

      {/* crosshair */}
      <svg viewBox="0 0 55 55" className="absolute left-[419px] top-[224px] size-[55px]" fill="none" stroke="#b4b4b4" aria-hidden="true">
        <path d="M0 27.500h25M30 27.500h25M27.500 0v25M27.500 30v25M26 26h3v3h-3z" />
      </svg>

      {/* UCS icon */}
      <svg viewBox="0 0 46 48" className="absolute bottom-[6px] left-[8px] h-12 w-[46px]" fill="none" stroke="#a5a5a5" aria-hidden="true">
        <path d="M2.500 39.500h5v5h-5zM5 14v28M5 42h28M6 2l3 4 3-4M9 6v5M35 34l7 7M42 34l-7 7" />
      </svg>

      {/* command line */}
      <div className="absolute bottom-px left-[209px] flex h-[14px] w-[370px] items-center bg-[#1f242b]">
        <span className="ml-[2px] h-[10px] w-1 border-x border-dotted border-[#8b929b]" />
        <button aria-label="close" className="ml-[2px]"><Icon name="close" className="size-[6px]" /></button>
        <button aria-label="customize" className="mx-[5px]"><Icon name="wrench" className="size-[8px]" /></button>
        <div className="flex h-full flex-1 items-center gap-[2px] bg-[#afb0b0] pl-[2px]">
          <Icon name="prompt" className="size-[10px]" />
          <svg viewBox="0 0 8 5" className="w-[3px]" aria-hidden="true"><path fill="#333" d="M0 0h8L4 5z" /></svg>
          <input aria-label="命令" placeholder="键入命令" className="ml-px min-w-0 flex-1 bg-transparent italic text-[#222] outline-none placeholder:text-[#55585c]" />
        </div>
      </div>
    </main>
  )
}

const snaps = [
  { name: 'infer' }, { name: 'dynInput', on: true }, { name: 'ortho' }, { name: 'polar', on: true },
  { name: 'isnap' }, { name: 'osnap', on: true }, { name: 'ortho' }, { name: 'polar', on: true },
]

function StatusBar() {
  return (
    <footer className="relative flex h-[18px] shrink-0 items-start border-t border-[#333b47] bg-[#222b38]">
      <nav className="flex w-[308px] items-center gap-[3px] pl-[7px] leading-3">
        <button className="rounded-b bg-[#3b4453] px-[5px] font-bold text-white">模型</button>
        <button className="rounded-b bg-[#2c3543] px-[5px]">布局1</button>
        <button className="rounded-b bg-[#2c3543] px-[5px]">布局2</button>
        <button className="px-1 text-[9px]">+</button>
      </nav>
      <div className="flex h-[15px] items-center whitespace-nowrap text-[#eef0f2]">
        <button className="flex h-full w-[44px] items-center gap-[2px] border-r border-[#3e4856] bg-[#2b3442] pl-1">
          比例 1:100 <Caret className="w-[3px]" />
        </button>
        <span className="h-full w-[79px] border-r border-[#3e4856] bg-[#2b3442] pr-[3px] text-right leading-[14px]">36694, 21818, 0</span>
        <button className="pl-[3px] pr-1">模型</button>
        <div className="flex items-center gap-1">
          <Icon name="grid" className="size-[10px]" />
          <Icon name="gridDots" className="size-[10px]" />
          <Caret />
        </div>
        <div className="flex items-center gap-px pl-1">
          {snaps.map((s, i) => (
            <button key={i} aria-label={s.name} className={clsx('flex h-[12px] w-[13px] items-center justify-center', s.on && 'bg-[#4b83c0]')}>
              <Icon name={s.name} className="size-[10px]" />
            </button>
          ))}
          <span className="ml-[6px] h-[9px] w-[2px] bg-[#6c7a8c]" />
          <span className="ml-[2px] h-[9px] w-px bg-[#6c7a8c]" />
        </div>
      </div>
      <div className="absolute inset-x-0 bottom-0 h-[3px] bg-[#1c2b3a]" />

      {/* dark veil over the right end of the bar */}
      <div className="absolute bottom-[6px] left-[617px] right-[5px] h-[12px] bg-[#0a0a0a]" />
      <div className="absolute bottom-[18px] left-[620px] right-[5px] h-4 bg-linear-to-b from-black to-[#0a0a0a]" />
      <div className="absolute bottom-[15px] left-[614px] h-[22px] w-[10px] rotate-[30deg] bg-linear-to-r from-[#3c3f5e]/60 to-black blur-[1px]" />
      <div className="absolute bottom-[4px] left-[627px] flex h-[2px] gap-10">
        {[0, 1, 2].map(n => <span key={n} className="w-3 bg-[#7f8c9a]" />)}
      </div>
      <div className="absolute bottom-[4px] right-[30px] h-[2px] w-3 bg-[#8e9aa8]" />
    </footer>
  )
}

export default function App() {
  const [tab, setTab] = useState('默认')

  return (
    <div className="flex h-screen flex-col overflow-hidden bg-[#222933] font-['Noto_Sans','Noto_Sans_CJK_SC',sans-serif] text-[7px] leading-[10px] text-[#d5dae0]">
      <TitleBar />
      <nav className="flex h-[14px] shrink-0 items-end gap-px pl-px">
        {tabs.map(name => (
          <button
            key={name}
            onClick={() => setTab(name)}
            className={clsx('h-3 whitespace-nowrap px-[5px]', tab === name ? 'bg-[#3b4453] text-white' : 'text-[#b4bbc5]')}>
            {name}
          </button>
        ))}
        <span className="mb-1 ml-[13px] h-[5px] w-2 bg-white" />
        <Caret className="mb-[5px] ml-1 w-[3px]" />
      </nav>
      <Ribbon />

      <div className="relative flex min-h-0 flex-1">
        <aside className="flex w-[43px] shrink-0 flex-col overflow-hidden bg-[#333b49] pb-1">
          <h2 className="flex h-3 items-center gap-1 pl-[3px]">
            <span className="h-[5px] border-l border-dotted border-[#a6adb7]" />T...
          </h2>
          <div className="flex-1 bg-[#f0f0f0] pt-[4px]">
            <ul className="grid h-[213px] auto-rows-fr text-[#20242b]">
              {menu.map(item => (
                <li key={item} className="flex items-center">
                  <svg viewBox="0 0 4 8" className="ml-[5px] h-[5px] w-[2px] shrink-0" aria-hidden="true"><path fill="#26282e" d="M0 0l4 4-4 4z" /></svg>
                  <button className="ml-2 flex w-7 shrink-0 justify-between">
                    {item.length === 2 ? item.split('').map(ch => <span key={ch}>{ch}</span>) : item}
                  </button>
                </li>
              ))}
            </ul>
          </div>
        </aside>
        <Canvas />
        <div className="pointer-events-none absolute left-[2px] top-[11px] h-[235px] w-[59px] border-2 border-[#e03a30]" />
      </div>

      <StatusBar />
    </div>
  )
}
